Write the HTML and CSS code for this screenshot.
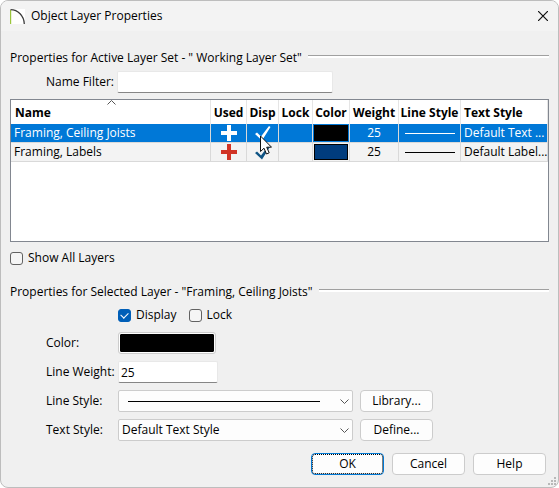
FILE: index.html
```html
<!DOCTYPE html>
<html lang="en">
<head>
  <meta charset="UTF-8">
  <title>Object Layer Properties</title>
  <meta name="viewport" content="width=device-width, initial-scale=1.0">
  <link rel="stylesheet" href="styles.css">
</head>
<body>
  <form class="dialog">
    <header class="titlebar">
      <svg class="logo" width="15" height="15" viewBox="0 0 15 15">
        <rect width="15" height="15" fill="#fff"/>
        <path d="M.5 1v14" stroke="#9bc53d" stroke-width="1.4"/>
        <path d="M.5 .7C8 .8 14 6.500 14.300 15" fill="none" stroke="#3c3c3c" stroke-width="1.3"/>
      </svg>
      <h1>Object Layer Properties</h1>
      <button type="button" class="close" aria-label="Close">
        <svg width="10" height="10" viewBox="0 0 10 10"><path d="M0 0l10 10M10 0L0 10" stroke="#111" stroke-width="1.200"/></svg>
      </button>
    </header>

    <main class="content">
      <h2 class="section">Properties for Active Layer Set - " Working Layer Set"</h2>
      <div class="filter">
        <label for="nameFilter">Name Filter:</label>
        <input type="text" class="field" id="nameFilter">
      </div>

      <div class="layers">
        <table>
          <colgroup>
            <col><col class="w-used"><col class="w-disp"><col class="w-lock"><col class="w-color"><col class="w-weight"><col class="w-line"><col class="w-text">
          </colgroup>
          <thead>
            <tr>
              <th class="name">Name
                <svg class="sort" width="9" height="5" viewBox="0 0 9 5"><path d="M.5 4.500l4-4 4 4" fill="none" stroke="#555"/></svg>
              </th>
              <th>Used</th><th>Disp</th><th>Lock</th><th>Color</th><th>Weight</th><th>Line Style</th><th class="text">Text Style</th>
            </tr>
          </thead>
          <tbody>
            <tr class="selected">
              <td class="name">Framing, Ceiling Joists</td>
              <td><svg width="16" height="16" viewBox="0 0 16 16"><path d="M8 0v16M0 8h16" stroke="#fff" stroke-width="4"/></svg></td>
              <td class="disp">
                <svg width="16" height="15" viewBox="0 0 16 15"><path d="M0 8l2-1.500 4 4L14 0l1.500 1L7 14.500z" fill="#fff"/></svg>
                <svg class="pointer" width="12" height="20" viewBox="0 0 12 20"><path d="M.5 1v15.500l3.500-3.300 2.500 5.800 2.700-1.200-2.500-5.600h4.800z" fill="#fff" stroke="#111"/></svg>
              </td>
              <td></td>
              <td class="color"><span class="swatch black"></span></td>
              <td>25</td>
              <td><span class="line"></span></td>
              <td class="text">Default Text ...</td>
            </tr>
            <tr>
              <td class="name">Framing, Labels</td>
              <td><svg width="16" height="16" viewBox="0 0 16 16"><path d="M8 0v16M0 8h16" stroke="#d13426" stroke-width="4"/></svg></td>
              <td><svg width="16" height="15" viewBox="0 0 16 15"><path d="M0 8l2-1.500 4 4L14 0l1.500 1L7 14.500z" fill="#0f5484"/></svg></td>
              <td></td>
              <td class="color"><span class="swatch blue"></span></td>
              <td>25</td>
              <td><span class="line"></span></td>
              <td class="text">Default Label...</td>
            </tr>
          </tbody>
        </table>
      </div>

      <label class="check"><input type="checkbox">Show All Layers</label>

      <h2 class="section selected-layer">Properties for Selected Layer - "Framing, Ceiling Joists"</h2>
      <div class="checks">
        <label class="check"><input type="checkbox" checked>Display</label>
        <label class="check"><input type="checkbox">Lock</label>
      </div>

      <div class="props">
        <label for="color">Color:</label>
        <button type="button" class="color-btn" id="color" aria-label="Color"></button>

        <label for="weight">Line Weight:</label>
        <input type="text" class="field weight" id="weight" value="25">

        <label for="lineStyle">Line Style:</label>
        <div class="row">
          <div class="combo">
            <select class="line-select" id="lineStyle"><option></option></select>
            <svg class="arrow" width="9" height="5" viewBox="0 0 9 5"><path d="M.5 .5l4 4 4-4" fill="none" stroke="#555"/></svg>
          </div>
          <button type="button" class="btn">Library...</button>
        </div>

        <label for="textStyle">Text Style:</label>
        <div class="row">
          <div class="combo">
            <select id="textStyle"><option>Default Text Style</option></select>
            <svg class="arrow" width="9" height="5" viewBox="0 0 9 5"><path d="M.5 .5l4 4 4-4" fill="none" stroke="#555"/></svg>
          </div>
          <button type="button" class="btn">Define...</button>
        </div>
      </div>
    </main>

    <footer class="actions">
      <button type="button" class="btn default">OK</button>
      <button type="button" class="btn">Cancel</button>
      <button type="button" class="btn">Help</button>
      <svg class="grip" width="8" height="8" viewBox="0 0 8 8"><path d="M6 0h2v2H6zM3 3h2v2H3zM6 3h2v2H6zM0 6h2v2H0zM3 6h2v2H3zM6 6h2v2H6z" fill="#b8b8b8"/></svg>
    </footer>
  </form>
</body>
</html>
```

FILE: styles.css
```css
* {
  box-sizing: border-box;
}

body {
  margin: 0;
  background: #fff;
  color: #000;
  font: 12px/18px "Open Sans", "Noto Sans", sans-serif;
}

input, select, button {
  font: inherit;
  color: inherit;
  margin: 0;
}

h1, h2 {
  margin: 0;
  font-size: 12px;
  font-weight: normal;
}

.dialog {
  position: relative;
  display: flex;
  flex-direction: column;
  min-height: 100vh;
  background: #f0f0f0;
  border: 1px solid #bdbdbd;
  border-radius: 8px;
  overflow: hidden;
}

.titlebar {
  display: flex;
  align-items: center;
  gap: 6px;
  height: 30px;
  padding: 0 10px 0 9px;
  background: #f3f3f3;
}

.close {
  display: flex;
  margin-left: auto;
  padding: 0;
  border: 0;
  background: none;
}

.content {
  padding: 18px 9px 0;
}

.section {
  display: flex;
  gap: 6px;
}

.section::after {
  content: "";
  flex: 1;
  height: 2px;
  margin-top: 6px;
  background: #fff;
  border-top: 1px solid #a0a0a0;
}

.filter {
  display: flex;
  align-items: center;
  gap: 8px;
  margin: 4px 0 6px 36px;
}

.filter label {
  width: 63px;
  white-space: nowrap;
}

.field {
  width: 216px;
  height: 22px;
  padding: 0 2px;
  background: #fff;
  border: 1px solid #e8e8e8;
  border-bottom-color: #868686;
  border-radius: 2px;
}

.field.weight {
  width: 100px;
}

/* layer list */
.layers {
  height: 143px;
  background: #fff;
  border: 1px solid #828790;
}

table {
  width: 100%;
  table-layout: fixed;
  border-collapse: separate;
  border-spacing: 0;
}

.w-used { width: 36px; }
.w-disp { width: 32px; }
.w-lock { width: 34px; }
.w-color { width: 37px; }
.w-weight { width: 49px; }
.w-line { width: 62px; }
.w-text { width: 87px; }

th, td {
  padding: 0;
  border-right: 1px solid #d9d9d9;
  text-align: center;
  white-space: nowrap;
}

th {
  position: relative;
  height: 24px;
  padding-top: 2px;
  border-color: #e5e5e5;
}

td {
  height: 19px;
  line-height: 18px;
  background: #f3f3f3;
  border-bottom: 1px solid #d9d9d9;
}

th.name {
  padding-left: 4px;
  text-align: left;
}

td.name {
  padding-left: 3px;
  text-align: left;
}

th.text,
td.text {
  padding-left: 3px;
  text-align: left;
}

.sort {
  position: absolute;
  top: 0;
  left: 50%;
  margin-left: -4px;
}

.selected td {
  background: #0078d7;
  color: #fff;
}

td svg,
.swatch,
.line {
  display: block;
  margin: 0 auto;
}

.disp {
  position: relative;
}

.pointer {
  position: absolute;
  top: 11px;
  left: 13px;
  z-index: 1;
}

td.color {
  padding: 1px;
}

.swatch {
  height: 16px;
  border: 1px solid #000;
}

.swatch.black { background: #000; }
.swatch.blue { background: #003c7d; }

.line {
  width: 50px;
  height: 1px;
  background: currentColor;
}

/* tick boxes */
.check {
  display: flex;
  align-items: center;
  gap: 5px;
}

.layers + .check {
  margin-top: 7px;
}

.check input {
  appearance: none;
  width: 13px;
  height: 13px;
  background: #f5f5f5;
  border: 1px solid #626262;
  border-radius: 3px;
}

.check input:checked {
  display: flex;
  background: #005fb8;
  border-color: #005fb8;
}

.check input:checked::after {
  content: "";
  width: 7px;
  height: 4px;
  margin: 2px;
  border: solid #fff;
  border-width: 0 0 1px 1px;
  transform: rotate(-45deg);
}

.selected-layer {
  margin-top: 16px;
}

.checks {
  display: flex;
  gap: 12px;
  margin: 5px 0 8px 108px;
}

/* property rows */
.props {
  display: grid;
  grid-template-columns: 72px 1fr;
  align-items: center;
  row-gap: 7px;
  padding-left: 36px;
}

.props > label {
  white-space: nowrap;
}

.row {
  display: flex;
  gap: 7px;
}

.combo {
  position: relative;
  width: 235px;
}

select {
  display: block;
  appearance: none;
  width: 100%;
  height: 22px;
  padding: 0 3px;
  background: #fdfdfd;
  border: 1px solid #ccc;
  border-radius: 2px;
}

.line-select {
  background: linear-gradient(#000, #000) 9px 10px / calc(100% - 41px) 1px no-repeat #fdfdfd;
}

.arrow {
  position: absolute;
  top: 9px;
  right: 4px;
  pointer-events: none;
}

.color-btn {
  width: 98px;
  height: 22px;
  padding: 1px;
  background: #000 content-box;
  border: 1px solid #ccc;
  border-radius: 3px;
  box-shadow: inset 0 0 0 1px #fff;
}

.btn {
  width: 73px;
  height: 22px;
  padding: 0;
  background: #fdfdfd;
  border: 1px solid #ccc;
  border-radius: 4px;
}

.btn.default {
  border-color: #0078d4;
  outline: 1px dotted #000;
  outline-offset: -2px;
}

.actions {
  display: flex;
  justify-content: flex-end;
  gap: 8px;
  padding: 12px 12px;
}

.grip {
  position: absolute;
  right: 2px;
  bottom: 2px;
}
```
